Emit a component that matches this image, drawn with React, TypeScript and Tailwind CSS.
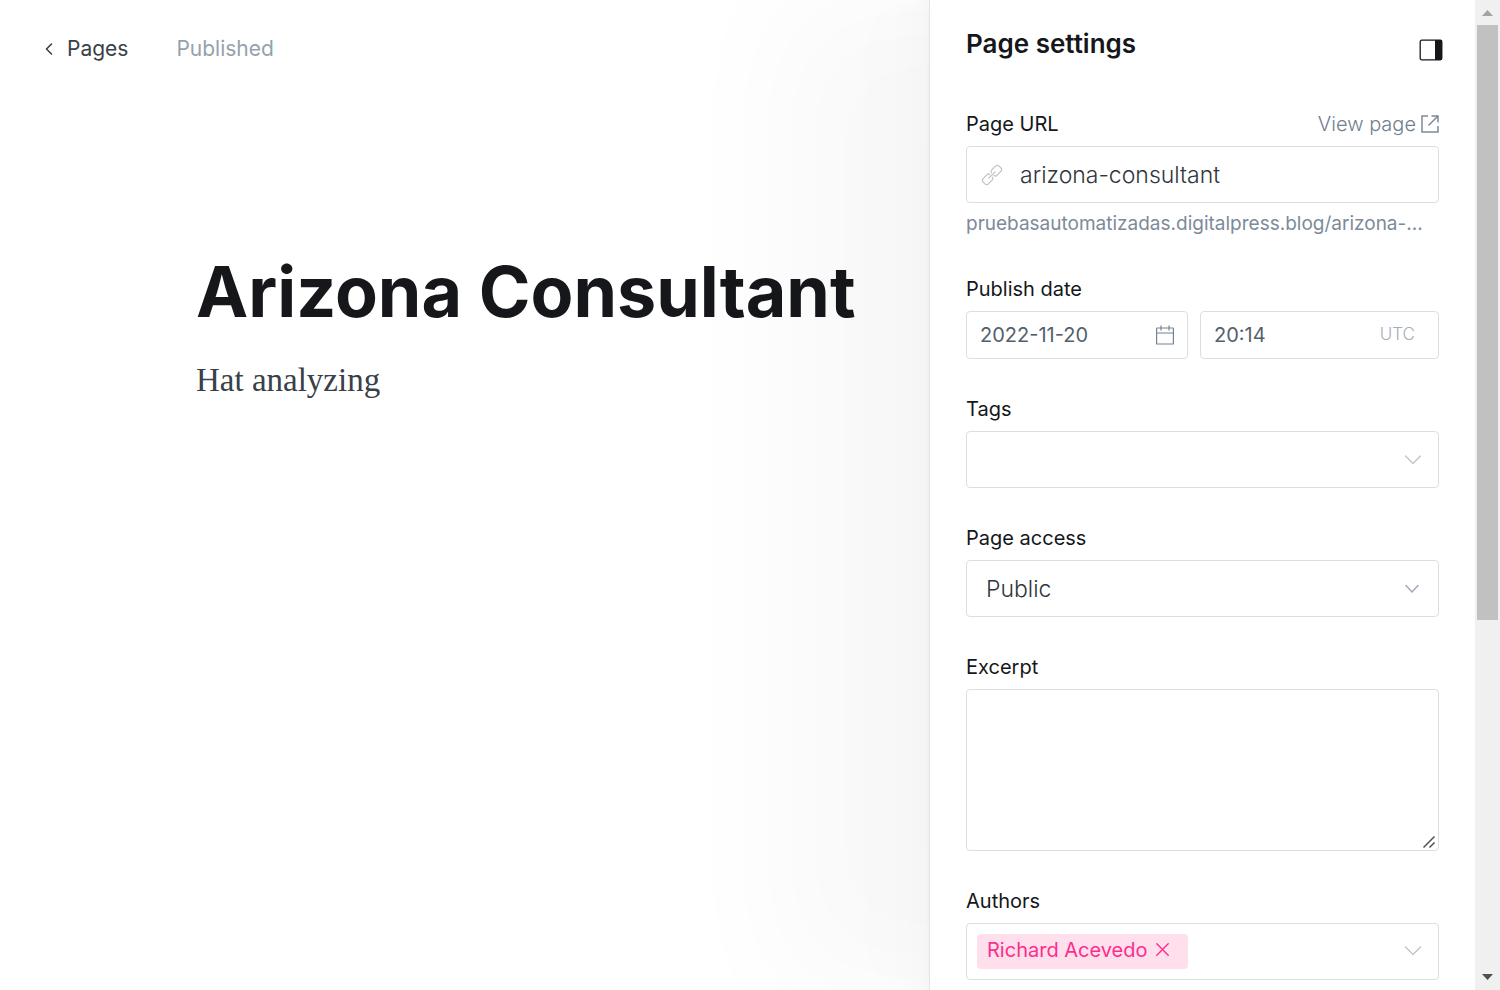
import type { ReactNode } from "react";

const box = "rounded border border-[#dddedf] bg-white";

function Chevron({ small = false }: { small?: boolean }) {
  return (
    <svg className="h-[10px] w-[18px] shrink-0" viewBox="0 0 18 10" fill="none" stroke={small ? "#a4adb9" : "#bcc2cb"} strokeWidth={small ? 1.6 : 1.2} strokeLinecap="round" strokeLinejoin="round" aria-hidden="true">
      <path d={small ? "M2 1.500 8 8l6-6.500" : "M1.500 1 9 8.500 16.500 1"} />
    </svg>
  );
}

function Field({ label, id, aside, children }: { label: string; id: string; aside?: ReactNode; children: ReactNode }) {
  return (
    <div className="flex flex-col gap-2">
      <div className="flex items-center justify-between">
        <label htmlFor={id} className="text-[20px] leading-[28px] text-[#15171a]">{label}</label>
        {aside}
      </div>
      {children}
    </div>
  );
}

function Editor() {
  return (
    <main className="min-w-0 flex-1">
      <header className="flex items-center gap-12 px-11 pt-[34px] text-[21px] leading-[30px]">
        <a href="#pages" className="flex items-center gap-3 text-[#394047]">
          <svg className="h-3 w-[11px]" viewBox="0 0 11 12" fill="none" stroke="currentColor" strokeWidth="1.600" strokeLinecap="round" strokeLinejoin="round" aria-hidden="true">
            <path d="M7.500 1 2.500 6l5 5" />
          </svg>
          <span>Pages</span>
        </a>
        <span className="text-[#95a1ad]">Published</span>
      </header>
      <article className="pl-[196px] pt-[188px]">
        <h1 className="whitespace-nowrap text-[70px] font-bold leading-[80px] text-[#15171a]">Arizona Consultant</h1>
        <p className="pt-6 font-['Liberation_Serif',serif] text-[33px] leading-[48px] text-[#394047]">Hat analyzing</p>
      </article>
    </main>
  );
}

function Scrollbar() {
  return (
    <div className="flex w-[25px] shrink-0 flex-col items-center bg-[#f0f0f0]" aria-hidden="true">
      <svg className="h-[25px] w-[25px] shrink-0" viewBox="0 0 25 25"><path d="M7 16h11l-5.500-6z" fill="#a3a3a3" /></svg>
      <div className="flex w-[21px] flex-1 flex-col">
        <div className="h-[63.300%] bg-[#c1c1c1]" />
      </div>
      <svg className="h-[25px] w-[25px] shrink-0" viewBox="0 0 25 25"><path d="M7 9h11l-5.500 6z" fill="#505050" /></svg>
    </div>
  );
}

function Settings() {
  return (
    <aside className="relative flex w-[571px] shrink-0 border-l border-[#e3e4e5] bg-white shadow-[-4px_0_3px_rgba(0,0,0,0.006),-10px_0_8px_rgba(0,0,0,0.006),-19px_0_15px_rgba(0,0,0,0.006),-33px_0_27px_rgba(0,0,0,0.006),-63px_0_50px_rgba(0,0,0,0.008),-150px_0_120px_rgba(0,0,0,0.028)]">
      <div className="min-w-0 flex-1 overflow-hidden px-9">
        <div className="flex items-start justify-between pt-7">
          <h2 className="text-[26px] font-semibold leading-[32px] text-[#15171a]">Page settings</h2>
          <button type="button" aria-label="Toggle settings" className="-mr-1 mt-[11px]">
            <svg className="h-[22px] w-6" viewBox="0 0 24 22" aria-hidden="true">
              <rect x="1.200" y="1.200" width="21.600" height="19.600" rx="1.500" fill="none" stroke="#15171a" strokeWidth="1.300" />
              <path d="M16 1h6a1 1 0 0 1 1 1v18a1 1 0 0 1-1 1h-6z" fill="#15171a" />
            </svg>
          </button>
        </div>
        <form className="flex flex-col gap-9 pt-[49px]">
          <div className="pb-px">
            <Field
              label="Page URL"
              id="url"
              aside={
                <a href="#view" className="flex items-center gap-[5px] text-[20px] font-light leading-[28px] text-[#71808f]">
                  View page
                  <svg className="h-[18px] w-[18px]" viewBox="0 0 18 18" fill="none" stroke="#7c8b9a" strokeWidth="1.500" aria-hidden="true">
                    <path d="M7 1H1v16h16v-6M10.500 1H17v6.500M17 1 7.500 10.500" />
                  </svg>
                </a>
              }
            >
              <div className={`${box} flex h-[57px] items-center gap-[18px] px-[15px]`}>
                <svg className="h-5 w-5 shrink-0 overflow-visible" viewBox="0 0 24 24" fill="none" stroke="#bcbec0" strokeWidth="1.300" strokeLinecap="round" strokeLinejoin="round" aria-hidden="true">
                  <g transform="rotate(-45 12 12)">
                    <path d="M10.500 10V9.800A2.300 2.300 0 0 0 8.200 7.500H1.500A3 3 0 0 0-1.500 10.500v3a3 3 0 0 0 3 3h6.700a2.300 2.300 0 0 0 2.300-2.300V14" />
                    <path d="M13.500 14v.2a2.300 2.300 0 0 0 2.300 2.300h6.700a3 3 0 0 0 3-3v-3a3 3 0 0 0-3-3h-6.700a2.300 2.300 0 0 0-2.300 2.300V10" />
                    <path d="M6.500 12h11" />
                  </g>
                </svg>
                <input id="url" defaultValue="arizona-consultant" className="min-w-0 flex-1 pt-[2px] text-[23px] font-light text-[#2f353b] outline-none" />
              </div>
            </Field>
            <p className="whitespace-nowrap pt-[7px] text-[19px] leading-[28px] text-[#7c8b9a]">pruebasautomatizadas.digitalpress.blog/arizona-...</p>
          </div>
          <Field label="Publish date" id="date">
            <div className="flex gap-3">
              <div className={`${box} flex h-12 w-[222px] items-center px-[13px]`}>
                <input id="date" defaultValue="2022-11-20" className="min-w-0 flex-1 text-[20px] text-[#54616d] outline-none" />
                <svg className="h-5 w-[18px] shrink-0" viewBox="0 0 18 20" fill="none" stroke="#738496" strokeWidth="1.200" aria-hidden="true">
                  <rect x=".6" y="3" width="16.800" height="16" rx=".6" />
                  <path d="M.6 8h16.800M5 .5V5.500M13 .5V5.500" />
                </svg>
              </div>
              <div className={`${box} flex h-12 min-w-0 flex-1 items-center pl-[13px] pr-[23px]`}>
                <input aria-label="Publish time" defaultValue="20:14" className="min-w-0 flex-1 text-[20px] text-[#54616d] outline-none" />
                <span className="text-[17px] font-light text-[#a4adb8]">UTC</span>
              </div>
            </div>
          </Field>
          <Field label="Tags" id="tags">
            <div className={`${box} flex h-[57px] items-center px-4`}>
              <input id="tags" className="min-w-0 flex-1 text-[23px] outline-none" />
              <Chevron />
            </div>
          </Field>
          <Field label="Page access" id="access">
            <div className={`${box} flex h-[57px] items-center pl-[19px] pr-4`}>
              <select id="access" className="min-w-0 flex-1 appearance-none pt-[2px] text-[23px] font-light text-[#2f353b] outline-none">
                <option>Public</option>
              </select>
              <Chevron small />
            </div>
          </Field>
          <Field label="Excerpt" id="excerpt">
            <div className="relative">
              <textarea id="excerpt" className={`${box} block h-[162px] w-full resize-none px-4 py-3 text-[23px] outline-none`} />
              <svg className="absolute bottom-[2px] right-[3px] h-[14px] w-[14px]" viewBox="0 0 14 14" stroke="#505050" strokeWidth="1.500" aria-hidden="true">
                <path d="M1.500 12.500 12.500 1.500M7.500 12.500l5-5" />
              </svg>
            </div>
          </Field>
          <Field label="Authors" id="authors">
            <div className={`${box} flex h-[57px] items-center pb-px pl-[10px] pr-4`}>
              <span className="flex h-[35px] items-center gap-2 rounded bg-[#ffdfec] pb-[3px] pl-[10px] pr-[19px] text-[20px] text-[#fb2d8d]">
                Richard Acevedo
                <button type="button" aria-label="Remove Richard Acevedo">
                  <svg className="h-[13px] w-[13px]" viewBox="0 0 13 13" stroke="currentColor" strokeWidth="1.400" strokeLinecap="round" aria-hidden="true">
                    <path d="m.8.8 11.400 11.400M12.200.8.8 12.200" />
                  </svg>
                </button>
              </span>
              <input id="authors" className="min-w-0 flex-1 outline-none" />
              <Chevron />
            </div>
          </Field>
        </form>
      </div>
      <Scrollbar />
    </aside>
  );
}

export default function App() {
  return (
    <div className="flex h-screen overflow-hidden bg-white font-['Inter',sans-serif]">
      <Editor />
      <Settings />
    </div>
  );
}
